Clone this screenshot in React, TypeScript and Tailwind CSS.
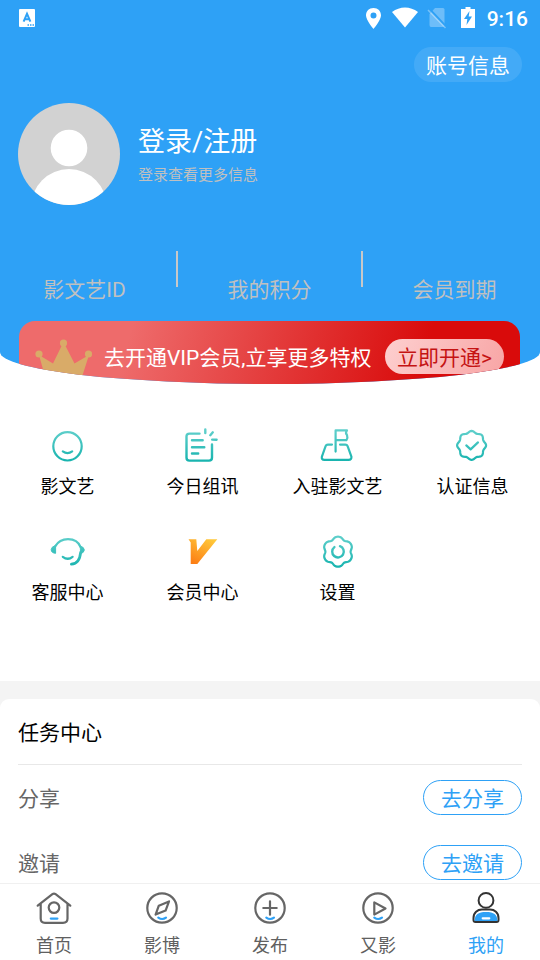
import React from 'react';

// closed wavy outline used by the badge and the gear
const wavyPath = (cx: number, cy: number, radius: number, depth: number, lobes: number, flat = 0) => {
  const points: string[] = [];
  for (let i = 0; i < 96; i++) {
    const a = (i / 96) * Math.PI * 2;
    const r = radius + depth * Math.cos(a * lobes) - flat * Math.cos(a * lobes * 2);
    points.push(`${(cx + r * Math.sin(a)).toFixed(2)} ${(cy - r * Math.cos(a)).toFixed(2)}`);
  }
  return `M${points.join('L')}Z`;
};

const Glyph = ({ children }: { children: React.ReactNode }) => (
  <svg viewBox="0 0 36 36" className="w-9 h-9" fill="none" strokeWidth="2.2" strokeLinecap="round" strokeLinejoin="round" aria-hidden="true">
    {children}
  </svg>
);

// latin runs inside Chinese labels
const Latin = ({ children }: { children: React.ReactNode }) => (
  <span className="leading-none font-[Roboto,sans-serif]">{children}</span>
);

const services = [
  {
    label: '影文艺',
    icon: (
      <g stroke="url(#teal)">
        <circle cx="17.5" cy="18.3" r="14.2" />
        <path d="M12.8 23.4Q17.5 26.8 22.2 23.4" />
      </g>
    ),
  },
  {
    label: '今日组讯',
    icon: (
      <g stroke="url(#teal)" strokeWidth="2.4">
        <path d="M14.5 5.6H4.5Q1.5 5.6 1.5 8.6V29.5Q1.5 32.6 4.5 32.6H24Q27 32.6 27 29.5V16.5" />
        <path d="M7 12.2H17.7M7 19.2H19.3M7 25.5H13.2" />
        <path d="M20.3 1.5V5M25.3 7.2L27.8 4.3M27.2 11.6L31.6 11.8" />
      </g>
    ),
  },
  {
    label: '入驻影文艺',
    icon: (
      <g stroke="url(#teal)">
        <path d="M15.6 23.6V2.4H27Q25 5 27 7Q28 9.5 26.4 12.2H15.6" />
        <path d="M12 16.6H7.8Q6.2 16.6 5.6 18.2L1.9 28.6Q1.2 31.8 4.4 31.8H28.6Q31.8 31.8 31.4 28.6L27.6 18.2Q27 16.6 25.4 16.6H20" />
      </g>
    ),
  },
  {
    label: '认证信息',
    icon: (
      <g stroke="url(#teal)">
        <path d={wavyPath(16.6, 17.4, 13.6, 0.9, 8)} />
        <path d="M11.3 17.4L15.6 21.4L23 14.4" />
      </g>
    ),
  },
  {
    label: '客服中心',
    icon: (
      <g stroke="url(#teal)">
        <path d="M5 12.6C8 7.5 12.5 5.2 18 5.2C24 5.2 28.6 8 30.6 13.2" />
        <path d="M30.6 18.5C30 25.5 27 29.8 21.4 30.2" strokeWidth="2.8" />
        <path d="M5.6 11.5V19.3Q1.2 18.9 1.2 15.5Q1.6 12.3 5.6 11.5ZM30.6 12.2Q34.3 13.2 34.3 16Q34 18.8 31 19.6Z" fill="url(#teal)" strokeWidth="1" />
        <path d="M12.8 22.8Q17.8 26.7 22.6 22.8" />
      </g>
    ),
  },
  {
    label: '会员中心',
    icon: <path d="M3.5 5.3H11.3L12.3 17L21.3 5.3H32.3L12.3 30H5.7V8.6Z" fill="url(#orange)" />,
  },
  {
    label: '设置',
    icon: (
      <g stroke="url(#teal)">
        <path d={wavyPath(18, 17.7, 14, 1.2, 6, 0.2)} />
        <path d="M20 12.2A5.8 5.8 0 1 1 14.4 13.1" strokeWidth="2.4" />
      </g>
    ),
  },
];

const smile = <path d="M14.3 27.6Q18.2 30.4 22 27.6" stroke="#2ea1f6" />;

const tabs = [
  {
    label: '首页',
    icon: (
      <>
        <path d="M1.7 15.7L16.4 4.2Q18 3 19.6 4.2L34.3 15.7M4.7 14V28.5Q4.7 32.8 9 32.8H27Q31.5 32.8 31.5 28.5V14" />
        <circle cx="18" cy="17.6" r="5.3" />
        <path d="M14.8 28.6H21.4" stroke="#2ea1f6" />
      </>
    ),
  },
  {
    label: '影博',
    icon: (
      <>
        <circle cx="18" cy="18" r="14.7" />
        <path d="M25 11.4L14.8 15.7L11.6 24.6L21.6 20.6Z" />
        {smile}
      </>
    ),
  },
  {
    label: '发布',
    icon: (
      <>
        <circle cx="18" cy="18" r="14.7" />
        <path d="M11.3 18H24.7M18 11.3V24.7" />
        {smile}
      </>
    ),
  },
  {
    label: '又影',
    icon: (
      <>
        <circle cx="18" cy="18" r="14.7" />
        <path d="M14.3 12.4V24.6L25.5 18.5Z" />
        {smile}
      </>
    ),
  },
  {
    label: '我的',
    active: true,
    icon: (
      <>
        <circle cx="18" cy="10.4" r="7.4" strokeWidth="2" />
        <path d="M5.5 30V28C5.5 22.5 9.5 19.6 14 19.6H22C26.5 19.6 30.5 22.5 30.5 28V30Q30.5 32 28.5 32H7.5Q5.5 32 5.5 30Z" fill="white" strokeWidth="2" />
        <path d="M6.6 31C6.8 24.5 10 22 18 22C26 22 29.2 24.5 29.4 31Z" fill="#2ea1f6" stroke="none" />
        <path d="M14.7 28.3H21.3" stroke="white" />
      </>
    ),
  },
];

const stats = [
  { id: 'account', label: <>影文艺<Latin>ID</Latin></> },
  { id: 'points', label: '我的积分' },
  { id: 'expiry', label: '会员到期' },
];

const tasks = [
  { label: '分享', action: '去分享' },
  { label: '邀请', action: '去邀请' },
];

const Gradients = () => (
  <svg className="absolute w-0 h-0" aria-hidden="true">
    <defs>
      <linearGradient id="teal" gradientUnits="userSpaceOnUse" x1="0" y1="2" x2="0" y2="34">
        <stop offset="0" stopColor="#5fcfcb" />
        <stop offset="1" stopColor="#16b3ae" />
      </linearGradient>
      <linearGradient id="orange" x1="0.8" y1="0" x2="0.2" y2="1">
        <stop offset="0" stopColor="#ffc83a" />
        <stop offset="1" stopColor="#fc7d14" />
      </linearGradient>
    </defs>
  </svg>
);

const StatusBar = () => (
  <div className="flex items-center justify-between h-9 pl-[19px] pr-3 text-white">
    <svg viewBox="0 0 16 18" className="w-4 h-[18px]" aria-hidden="true">
      <rect width="16" height="18" rx="1" fill="white" />
      <path d="M4.6 12.6L8 4.8L11.4 12.6M6 10.2H10" fill="none" stroke="#2ea1f6" strokeWidth="2" />
      <path d="M8.5 16H15" stroke="#2ea1f6" strokeWidth="1.4" strokeDasharray="1.5 1" />
    </svg>
    <div className="flex items-center">
      <svg viewBox="0 0 16 22" className="w-4 h-[22px] mr-[11px]" aria-hidden="true">
        <path fillRule="evenodd" d="M8.5 1C4 1 1 4 1 8.5C1 13 8.5 22 8.5 22S16 13 16 8.5C16 4 13 1 8.5 1ZM8.5 5.5A3 3 0 1 1 8.5 11.5A3 3 0 0 1 8.5 5.5Z" fill="white" />
      </svg>
      <svg viewBox="0 0 26 22" className="w-[26px] h-[22px] mr-[9px]" aria-hidden="true">
        <path d="M13 20.5L0 5Q6 0.5 13 0.5T26 5Z" fill="white" />
      </svg>
      <svg viewBox="0 0 20 22" className="w-5 h-[22px] mr-3.5" aria-hidden="true">
        <path d="M8 1H16Q17.5 1 17.5 2.5V18Q17.5 20 16 20H4Q2.5 20 2.5 18V7Z" fill="white" opacity="0.3" />
        <path d="M2.5 2L19.5 20" stroke="#2ea1f6" strokeWidth="2" />
        <path d="M1 3L18.5 21" stroke="white" strokeWidth="1.6" opacity="0.35" />
      </svg>
      <svg viewBox="0 0 14 22" className="w-3.5 h-[22px] mr-3" aria-hidden="true">
        <path d="M4.5 0H9.5V2H14V21H0V2H4.5Z" fill="white" />
        <path d="M8.5 4L3 12H6.3L5.5 18L11 9.5H7.7Z" fill="#2ea1f6" />
      </svg>
      <span className="pt-0.5 text-[21px] leading-6 font-medium font-[Roboto,sans-serif]">9:16</span>
    </div>
  </div>
);

const ProfileHeader = () => (
  <header className="h-96 overflow-hidden bg-[#2ea1f6] rounded-b-[50%_32px]">
    <StatusBar />
    <div className="flex justify-end px-[18px] pt-[11px]">
      <button className="h-[35px] px-3 rounded-full bg-white/10 text-white text-[21px] leading-[35px]">账号信息</button>
    </div>
    <div className="flex items-center gap-[18px] px-[18px] pt-[21px]">
      <svg viewBox="0 0 102 102" className="w-[102px] h-[102px] rounded-full bg-[#d2d2d2]" aria-hidden="true">
        <circle cx="51" cy="45" r="18.3" fill="white" />
        <circle cx="51" cy="104" r="38" fill="white" />
      </svg>
      <div>
        <a href="#login" className="block text-[27px] leading-9 text-white">登录<Latin>/</Latin>注册</a>
        <p className="mt-1 text-[15px] leading-6 text-[#c0c0c0]">登录查看更多信息</p>
      </div>
    </div>
    <div className="flex -ml-[7px] -mr-1.5 pt-[46px] text-[21px] leading-[30px] text-[#c0c0c0]">
      {stats.map((s, i) => (
        <React.Fragment key={s.id}>
          {i > 0 && <span className="w-0.5 h-9 bg-[#c8c8c8]" />}
          <span className="flex-1 pt-[22px] pb-0.5 text-center">{s.label}</span>
        </React.Fragment>
      ))}
    </div>
    <div className="flex items-center h-[71px] ml-[19px] mr-5 mt-4 px-4 rounded-2xl bg-[linear-gradient(105deg,#ee6b6b_22%,#d90b0b_80%)] text-[21px] text-white">
      <svg viewBox="0 0 58 42" className="w-[58px] h-[42px] mt-1 mr-[11px]" fill="#d9ab68" aria-hidden="true">
        <circle cx="4" cy="16" r="3.6" />
        <circle cx="28.5" cy="5" r="3.6" />
        <circle cx="53.5" cy="16" r="3.6" />
        <path d="M4 17L18 25.5L27.5 6H29.5L39.5 25.5L54 17L46 42H11Z" />
      </svg>
      <span className="flex-1 leading-[35px] whitespace-nowrap">去开通<Latin>VIP</Latin>会员<Latin>,</Latin>立享更多特权</span>
      <button className="h-[35px] px-3 rounded-full bg-[linear-gradient(115deg,#fdcfcf,#f8a5a5)] text-[#c51313] leading-[35px]">立即开通<Latin>&gt;</Latin></button>
    </div>
  </header>
);

export default function App() {
  return (
    <div className="flex flex-col h-screen bg-white font-['Noto_Sans_CJK_SC',sans-serif]">
      <Gradients />
      <main className="flex-1 min-h-0 overflow-y-auto [scrollbar-width:none]">
        <ProfileHeader />

        <section className="grid grid-cols-4 pt-11 pb-[41px]">
          {services.map((s) => (
            <button key={s.label} className="flex flex-col items-center gap-2 pb-[35px] text-lg leading-[27px] text-black">
              <Glyph>{s.icon}</Glyph>
              {s.label}
            </button>
          ))}
        </section>

        <div className="pt-[18px] bg-[#f4f4f4]">
          <section className="px-[18px] rounded-t-[9px] bg-white text-[21px]">
            <h2 className="py-[18px] leading-[29px] border-b border-[#e8e8e8] text-black">任务中心</h2>
            {tasks.map((t) => (
              <div key={t.label} className="flex items-center justify-between h-[65px] text-[#666]">
                <span>{t.label}</span>
                <button className="h-[35px] px-[17px] rounded-full border border-[#2ea1f6] text-[#2ea1f6] leading-[33px]">{t.action}</button>
              </div>
            ))}
          </section>
        </div>
      </main>

      <nav className="grid grid-cols-5 h-[77px] border-t border-[#f0f0f0] bg-white">
        {tabs.map((t) => (
          <a
            key={t.label}
            href={`#${t.label}`}
            className={`flex flex-col items-center gap-[5px] pt-1.5 text-lg leading-[27px] ${t.active ? 'text-[#2ea1f6]' : 'text-[#606060]'}`}
          >
            <span className={t.active ? 'text-[#333]' : 'text-[#666]'}>
              <Glyph>
                <g stroke="currentColor">{t.icon}</g>
              </Glyph>
            </span>
            {t.label}
          </a>
        ))}
      </nav>
    </div>
  );
}
